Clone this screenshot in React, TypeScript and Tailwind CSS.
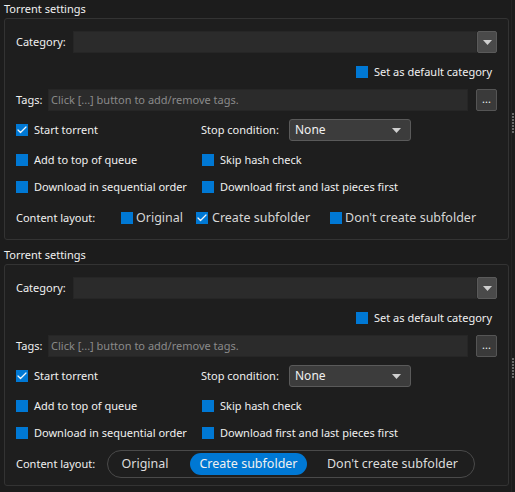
import { Check } from "lucide-react";

type BoxProps = { checked?: boolean };

function Box({ checked = false }: BoxProps) {
  return (
    <span className="inline-flex h-[12px] w-[12px] shrink-0 items-center justify-center bg-[#0078d4]">
      {checked && <Check size={12} strokeWidth={2.5} className="text-[#f2f6fa]" />}
    </span>
  );
}

function CheckItem({ label, checked, className = "" }: { label: string; checked?: boolean; className?: string }) {
  return (
    <span className={`inline-flex items-center gap-[6px] ${className}`}>
      <Box checked={checked} />
      <span>{label}</span>
    </span>
  );
}

function Caret() {
  return (
    <svg width="9" height="5" viewBox="0 0 9 5">
      <path d="M0 0h9L4.5 5z" fill="#cfcfcf" />
    </svg>
  );
}

function Section({ segmented }: { segmented?: boolean }) {
  return (
    <section>
      <div className="flex h-[18px] items-center px-[4px]">Torrent settings</div>
      <div className="ml-[4px] mr-[6px] h-[222px] rounded-[3px] border border-[#333] bg-[#1e1e1e] px-[11px] pt-[12px]">
        {/* category */}
        <div className="flex h-[22px] items-center">
          <span className="w-[57px]">Category:</span>
          <div className="flex h-[22px] flex-1 items-stretch">
            <div className="flex-1 border border-[#262626] bg-[#2b2b2b]" />
            <div className="flex w-[20px] items-center justify-center rounded-[2px] border border-[#5a5a5a] bg-[#4a4a4a]">
              <Caret />
            </div>
          </div>
        </div>
        <div className="mt-[7px] flex h-[24px] items-center justify-end pr-[5px]">
          <CheckItem label="Set as default category" />
        </div>
        {/* tags */}
        <div className="mt-[5px] flex h-[22px] items-center">
          <span className="w-[32px]">Tags:</span>
          <div className="flex h-[22px] flex-1 items-center border border-[#262626] bg-[#2b2b2b] px-[2px] text-[#8a8a8a]">
            Click [...] button to add/remove tags.
          </div>
          <div className="ml-[8px] flex h-[22px] w-[21px] items-center justify-center rounded-[2px] border border-[#555] bg-[#3a3a3a] pb-[4px] leading-none">
            ...
          </div>
        </div>
        {/* start torrent */}
        <div className="mt-[8px] flex h-[22px] items-center">
          <CheckItem label="Start torrent" checked className="w-[185px]" />
          <span className="w-[88px]">Stop condition:</span>
          <div className="flex h-[22px] w-[122px] items-center justify-between rounded-[3px] border border-[#5a5a5a] bg-[#3c3c3c] pl-[5px] pr-[9px] text-[12px]">
            <span>None</span>
            <Caret />
          </div>
        </div>
        <div className="mt-[9px] flex h-[20px] items-center">
          <CheckItem label="Add to top of queue" className="w-[186px]" />
          <CheckItem label="Skip hash check" />
        </div>
        <div className="mt-[7px] flex h-[20px] items-center">
          <CheckItem label="Download in sequential order" className="w-[186px]" />
          <CheckItem label="Download first and last pieces first" />
        </div>
        {/* content layout */}
        <div className="mt-[7px] flex h-[28px] items-center">
          {segmented ? (
            <>
              <span className="w-[91px]">Content layout:</span>
              <div className="flex h-[28px] w-[368px] items-center rounded-full border border-[#4a4a4a] px-[2px] text-[12.5px]">
                <span className="flex w-[70px] justify-center text-[#dcdcdc]">Original</span>
                <span className="ml-[10px] flex h-[22px] w-[117px] items-center justify-center rounded-full bg-[#0078d4]">
                  Create subfolder
                </span>
                <span className="flex flex-1 justify-center pl-[6px] text-[#dcdcdc]">Don't create subfolder</span>
              </div>
            </>
          ) : (
            <>
              <span className="w-[105px]">Content layout:</span>
              <span className="inline-flex w-[75px] items-center gap-[3px] text-[12.5px] text-[#d6d6d6]">
                <Box />
                Original
              </span>
              <span className="inline-flex w-[134px] items-center gap-[4px] text-[12.5px] text-[#d6d6d6]">
                <Box checked />
                Create subfolder
              </span>
              <span className="inline-flex items-center gap-[3px] text-[12.5px] text-[#d6d6d6]">
                <Box />
                Don't create subfolder
              </span>
            </>
          )}
        </div>
      </div>
    </section>
  );
}

function Grip({ top }: { top: number }) {
  return (
    <div className="absolute right-[1px] flex flex-col gap-[1px]" style={{ top }}>
      {Array.from({ length: 7 }).map((_, i) => (
        <span key={i} className="h-[2px] w-[2px] bg-[#6a6a6a]" />
      ))}
    </div>
  );
}

export default function App() {
  return (
    <div
      className="relative h-[492px] w-[515px] overflow-hidden bg-[#1c1c1c] text-[11px] text-[#f0f0f0]"
      style={{ fontFamily: '"Noto Sans", "Open Sans", sans-serif' }}
    >
      <div className="absolute right-[3px] top-0 h-full w-[1px] bg-[#242424]" />
      <Grip top={113} />
      <Grip top={358} />
      <div className="flex flex-col gap-[6px]">
        <Section />
        <Section segmented />
      </div>
    </div>
  );
}
